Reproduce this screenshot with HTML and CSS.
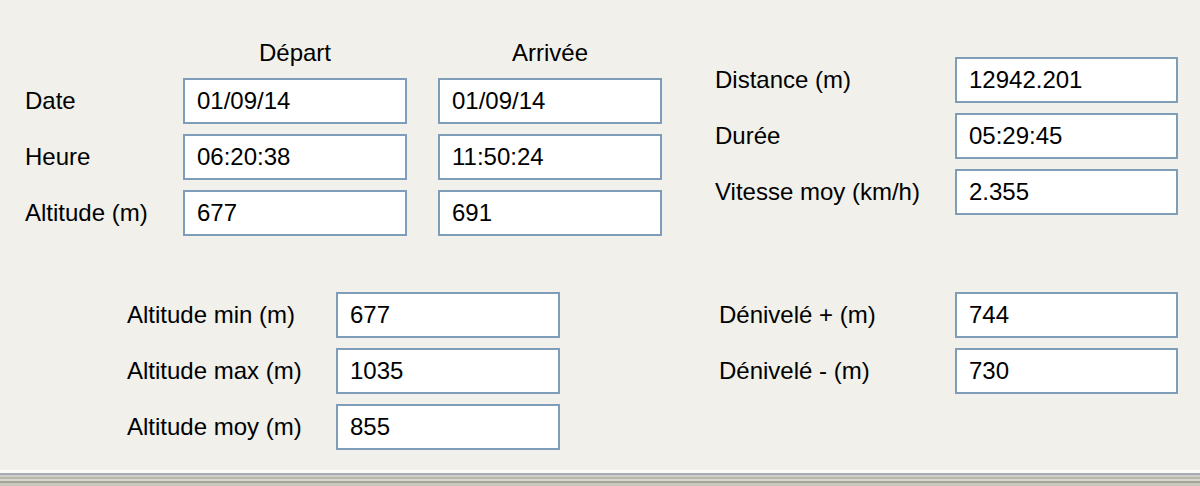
FILE: index.html
```html
<!DOCTYPE html>
<html lang="fr">
<head>
  <meta charset="UTF-8">
  <title>Statistiques du parcours</title>
  <link rel="stylesheet" href="styles.css">
</head>
<body>
  <div class="dialog">
    <div class="section top">
      <div class="grid times">
        <span></span>
        <div class="head">Départ</div>
        <div class="head">Arrivée</div>

        <label>Date</label>
        <div class="field">01/09/14</div>
        <div class="field">01/09/14</div>

        <label>Heure</label>
        <div class="field">06:20:38</div>
        <div class="field">11:50:24</div>

        <label>Altitude (m)</label>
        <div class="field">677</div>
        <div class="field">691</div>
      </div>

      <div class="grid totals">
        <label>Distance (m)</label>
        <div class="field">12942.201</div>

        <label>Durée</label>
        <div class="field">05:29:45</div>

        <label>Vitesse moy (km/h)</label>
        <div class="field">2.355</div>
      </div>
    </div>

    <div class="section bottom">
      <div class="grid altitudes">
        <label>Altitude min (m)</label>
        <div class="field">677</div>

        <label>Altitude max (m)</label>
        <div class="field">1035</div>

        <label>Altitude moy (m)</label>
        <div class="field">855</div>
      </div>

      <div class="grid elevation">
        <label>Dénivelé + (m)</label>
        <div class="field">744</div>

        <label>Dénivelé - (m)</label>
        <div class="field">730</div>
      </div>
    </div>

    <div class="status-edge"></div>
  </div>
</body>
</html>
```

FILE: styles.css
```css
:root {
  --dialog-bg: #f1f0eb;
  --field-border: #7f9db9;
  --text-color: #000;
}

* {
  box-sizing: border-box;
}

body {
  margin: 0;
  background-color: var(--dialog-bg);
  font-family: 'Liberation Sans', Arial, sans-serif;
  font-size: 24px;
  color: var(--text-color);
}

.dialog {
  height: 486px;
  display: flex;
  flex-direction: column;
  overflow: hidden;
}

.section {
  display: flex;
  align-items: flex-start;
}

.grid {
  display: grid;
  row-gap: 10px;
  align-items: center;
}

.grid label {
  white-space: nowrap;
}

.field {
  height: 46px;
  border: 2px solid var(--field-border);
  background-color: white;
  padding-left: 12px;
  display: flex;
  align-items: center;
}

.head {
  text-align: center;
  height: 30px;
  line-height: 30px;
}

/* top half */
.top {
  padding-top: 38px;
}

.times {
  margin-left: 25px;
  grid-template-columns: 127px 224px 224px;
  column-gap: 31px;
}

.totals {
  margin-left: 53px;
  margin-top: 19px;
  grid-template-columns: 240px 223px;
}

/* bottom half */
.bottom {
  margin-top: 56px;
}

.altitudes {
  margin-left: 127px;
  grid-template-columns: 209px 224px;
}

.elevation {
  margin-left: 159px;
  grid-template-columns: 236px 223px;
}

.status-edge {
  margin-top: auto;
  height: 16px;
  background: linear-gradient(to bottom,
    #fbfbf8 0, #fbfbf8 3px,
    #a9aab8 3px, #a9aab8 5px,
    #cfcfc6 5px, #cfcfc6 7px,
    #b9b8ae 7px, #b9b8ae 9px,
    #d8d8cc 9px, #d8d8cc 11px,
    #a6a59c 11px, #a6a59c 13px,
    #c9c8bd 13px);
}
```
